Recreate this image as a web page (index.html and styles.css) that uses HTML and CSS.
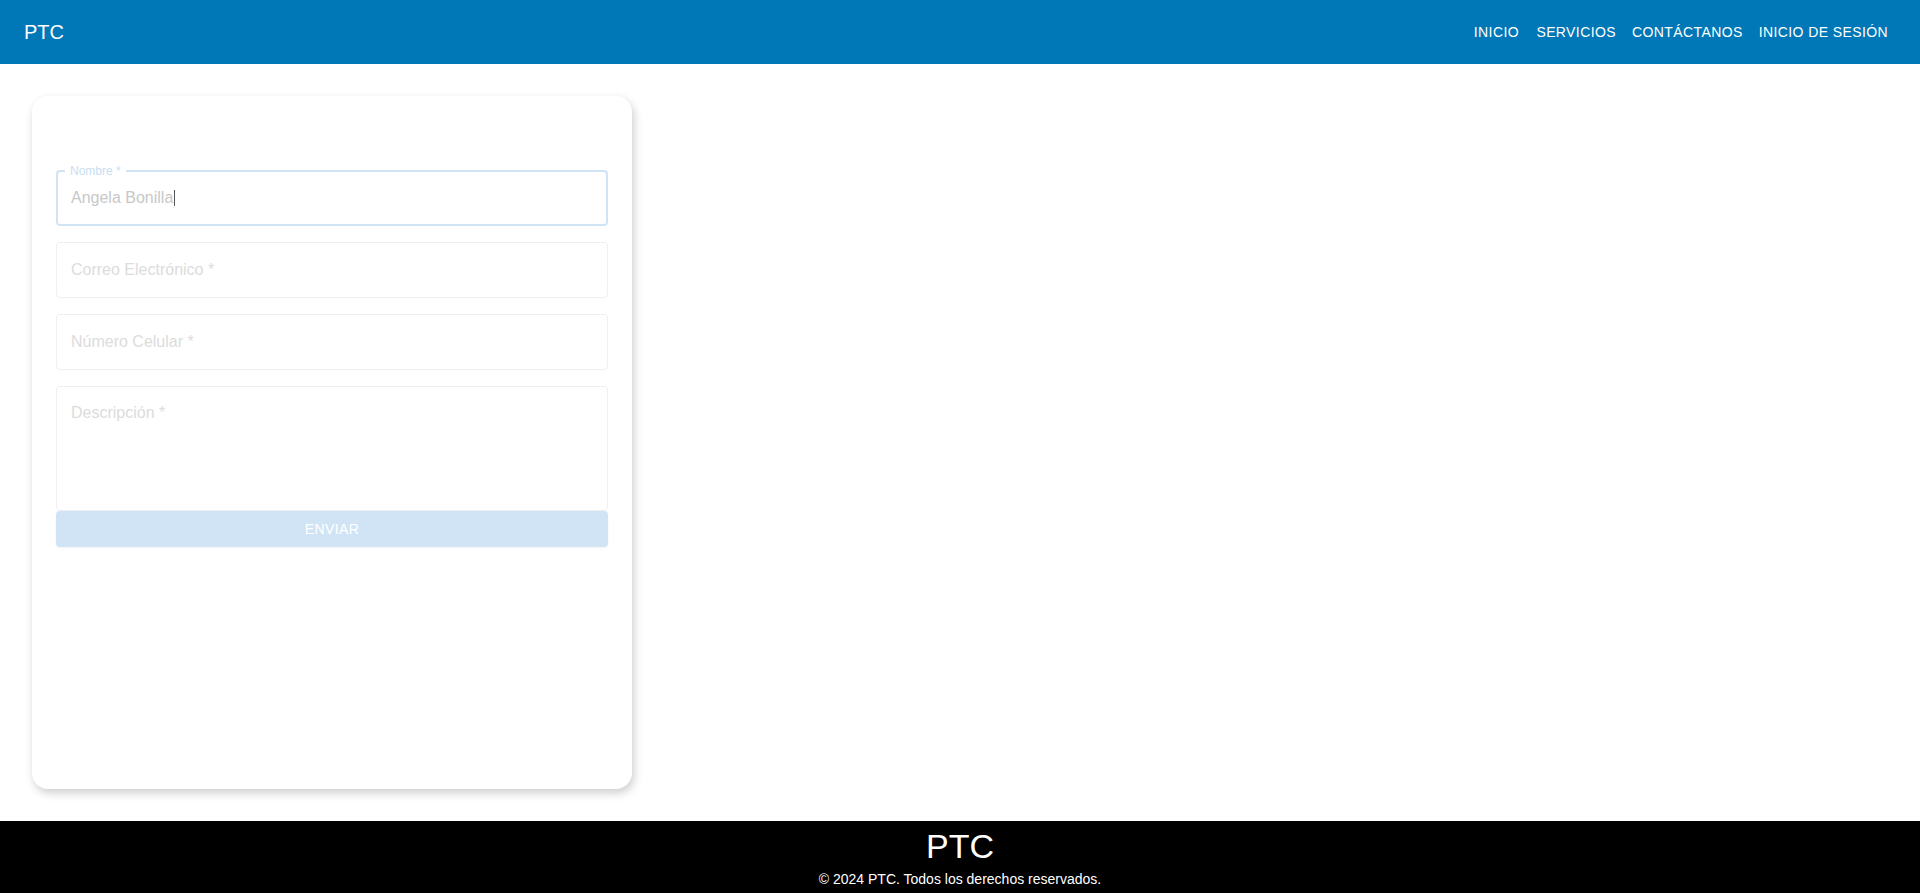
FILE: index.html
```html
<!DOCTYPE html>
<html lang="es">
<head>
<meta charset="utf-8">
<title>PTC - Contáctanos</title>
<link rel="stylesheet" href="styles.css">
</head>
<body>
  <header class="appbar">
    <div class="brand">PTC</div>
    <nav class="nav">
      <a class="nav-btn" href="#">Inicio</a>
      <a class="nav-btn" href="#">Servicios</a>
      <a class="nav-btn" href="#">Contáctanos</a>
      <a class="nav-btn" href="#">Inicio de sesión</a>
    </nav>
  </header>

  <main class="main">
    <section class="card">
      <form class="form">
        <div class="field field-focused">
          <span class="float-label">Nombre *</span>
          <span class="value">Angela Bonilla</span><span class="caret"></span>
        </div>
        <div class="field">
          <span class="placeholder">Correo Electrónico *</span>
        </div>
        <div class="field">
          <span class="placeholder">Número Celular *</span>
        </div>
        <div class="field field-multi">
          <span class="placeholder">Descripción *</span>
        </div>
        <button class="submit" type="button">Enviar</button>
      </form>
    </section>
  </main>

  <footer class="footer">
    <div class="footer-title">PTC</div>
    <div class="footer-copy">© 2024 PTC. Todos los derechos reservados.</div>
  </footer>
</body>
</html>
```

FILE: styles.css
```css
* {
  box-sizing: border-box;
}

html, body {
  margin: 0;
  padding: 0;
}

body {
  font-family: "Liberation Sans", Arial, Helvetica, sans-serif;
  background: #ffffff;
  min-height: 100vh;
  display: flex;
  flex-direction: column;
}

.appbar {
  height: 64px;
  background: #0077b6;
  color: #ffffff;
  display: flex;
  align-items: center;
  justify-content: space-between;
  padding: 0 24px;
  flex-shrink: 0;
}

.brand {
  font-size: 20px;
  line-height: 32px;
}

.nav {
  display: flex;
  align-items: center;
}

.nav-btn {
  min-width: 64px;
  padding: 6px 8px;
  font-size: 14px;
  line-height: 24.5px;
  letter-spacing: 0.4px;
  text-transform: uppercase;
  color: #ffffff;
  text-decoration: none;
  text-align: center;
}

.main {
  flex: 1;
  display: flex;
  align-items: stretch;
  padding: 32px;
}

.card {
  width: 600px;
  background: #ffffff;
  border-radius: 16px;
  box-shadow: 2px 4px 10px rgba(0, 0, 0, 0.2);
  padding: 24px;
}

.form {
  display: flex;
  flex-direction: column;
  padding-top: 50px;
}

.field {
  position: relative;
  height: 56px;
  border: 1px solid #f0f0f0;
  border-radius: 4px;
  display: flex;
  align-items: center;
  padding: 0 14px;
  font-size: 16px;
  margin-bottom: 16px;
}

.field-focused {
  border: 2px solid #d1e4f6;
  padding: 0 13px;
}

.field-multi {
  height: 125px;
  align-items: flex-start;
  padding-top: 17px;
  margin-bottom: 0;
}

.float-label {
  position: absolute;
  left: 7px;
  top: -9px;
  padding: 0 5px;
  background: #ffffff;
  font-size: 12px;
  line-height: 16px;
  color: #c9def3;
}

.value {
  color: #c8c8c8;
}

.caret {
  display: inline-block;
  width: 1px;
  height: 16px;
  background: #555555;
  margin-left: 1px;
}

.placeholder {
  color: #dcdcdc;
}

.submit {
  height: 36px;
  border: none;
  border-radius: 4px;
  background: #d1e4f6;
  color: #ffffff;
  font-family: "Liberation Sans", Arial, Helvetica, sans-serif;
  font-size: 14px;
  letter-spacing: 0.4px;
  text-transform: uppercase;
  box-shadow: 0 1px 3px rgba(0, 0, 0, 0.05);
}

.footer {
  background: #000000;
  color: #ffffff;
  text-align: center;
  padding: 4px 0 4px;
  flex-shrink: 0;
}

.footer-title {
  font-size: 34px;
  line-height: 42px;
}

.footer-copy {
  margin-top: 2px;
  font-size: 14px;
  line-height: 20px;
}
```
